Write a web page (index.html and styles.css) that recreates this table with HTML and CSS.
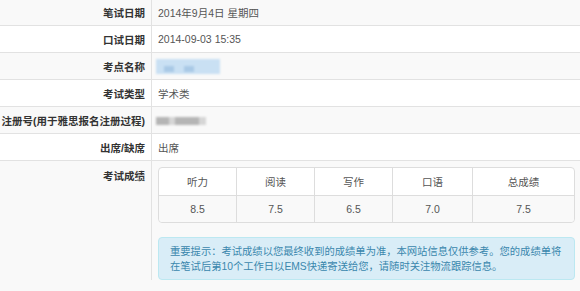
FILE: index.html
```html
<!DOCTYPE html>
<html lang="zh-CN">
<head>
<meta charset="utf-8">
<link rel="stylesheet" href="styles.css">
</head>
<body>
<div class="sheet">
  <div class="row odd"><div class="label">笔试日期</div><div class="value">2014年9月4日 星期四</div></div>
  <div class="row"><div class="label">口试日期</div><div class="value">2014-09-03 15:35</div></div>
  <div class="row odd"><div class="label">考点名称</div><div class="value"><span class="blur blue"><i></i><i></i></span></div></div>
  <div class="row"><div class="label">考试类型</div><div class="value">学术类</div></div>
  <div class="row odd"><div class="label">注册号(用于雅思报名注册过程)</div><div class="value"><span class="blur gray"><i></i><i></i></span></div></div>
  <div class="row"><div class="label">出席/缺席</div><div class="value">出席</div></div>
  <div class="row odd last"><div class="label top">考试成绩</div>
    <div class="value top">
      <table class="scores">
        <tr class="head"><td>听力</td><td>阅读</td><td>写作</td><td>口语</td><td>总成绩</td></tr>
        <tr class="nums"><td>8.5</td><td>7.5</td><td>6.5</td><td>7.0</td><td>7.5</td></tr>
      </table>
      <div class="alert">重要提示：考试成绩以您最终收到的成绩单为准，本网站信息仅供参考。您的成绩单将在笔试后第10个工作日以EMS快递寄送给您，请随时关注物流跟踪信息。</div>
    </div>
  </div>
</div>
</body>
</html>
```
FILE: styles.css
```css
html, body { margin: 0; padding: 0; background: #fff; }
body {
  font-family: "Liberation Sans", "Noto Sans CJK SC", sans-serif;
  font-size: 10.5px;
  color: #555;
  overflow: hidden;
}
.sheet { margin-top: -1px; }
.row {
  display: grid;
  grid-template-columns: 151px 1fr;
  border-bottom: 1px solid #e2e2e2;
  height: 26px;
}
.row.odd { background: #f9f9f9; }
.row.last { height: auto; border-bottom: none; padding-bottom: 11px; }
.label {
  text-align: right;
  padding-right: 6px;
  font-weight: bold;
  color: #333;
  display: flex;
  align-items: center;
  justify-content: flex-end;
  white-space: nowrap;
}
.value {
  border-left: 1px solid #e2e2e2;
  padding-left: 6px;
  display: flex;
  align-items: center;
}
.label.top { align-items: flex-start; padding-top: 6px; line-height: 18px; }
.value.top { display: block; padding-top: 6px; padding-right: 5px; }
.blur { display: inline-flex; gap: 6px; align-items: center; filter: blur(1.2px); }
.blur.blue {
  width: 64px; height: 15px; background: #c9e0f3; padding-left: 8px; box-sizing: border-box;
  margin-left: -2px; margin-top: 1px;
}
.blur.blue i { display: block; width: 10px; height: 6px; background: #a9c9e6; margin-top: 5px; }
.blur.blue i + i { margin-left: 4px; }
.blur.gray { width: 50px; height: 8px; background: #d6d6d6; margin-left: -2px; margin-top: 2px; }
.blur.gray i { display: block; width: 13px; height: 8px; background: #b5b5b5; }
.blur.gray i + i { width: 24px; }
.scores {
  width: 100%;
  border-collapse: separate;
  border-spacing: 0;
  border: 1px solid #ddd;
  border-radius: 4px;
  table-layout: fixed;
  background: #fff;
}
.scores td {
  text-align: center;
  height: 27px;
  padding: 0;
  border-left: 1px solid #ddd;
  color: #555;
}
.scores td:first-child { border-left: none; width: 77px; }
.scores td:nth-child(2), .scores td:nth-child(3) { width: 77px; }
.scores td:nth-child(4) { width: 79px; }
.scores .nums td { border-top: 1px solid #ddd; background: #f9f9f9; height: 26px; }
.scores .nums td:first-child { border-bottom-left-radius: 4px; }
.scores .nums td:last-child { border-bottom-right-radius: 4px; }
.alert {
  margin-top: 14px;
  background: #d9edf7;
  border: 1px solid #bce8f1;
  border-radius: 4px;
  color: #3a87ad;
  padding: 6px 4px 5px 11px;
  line-height: 15px;
  font-size: 10.3px;
}
```
